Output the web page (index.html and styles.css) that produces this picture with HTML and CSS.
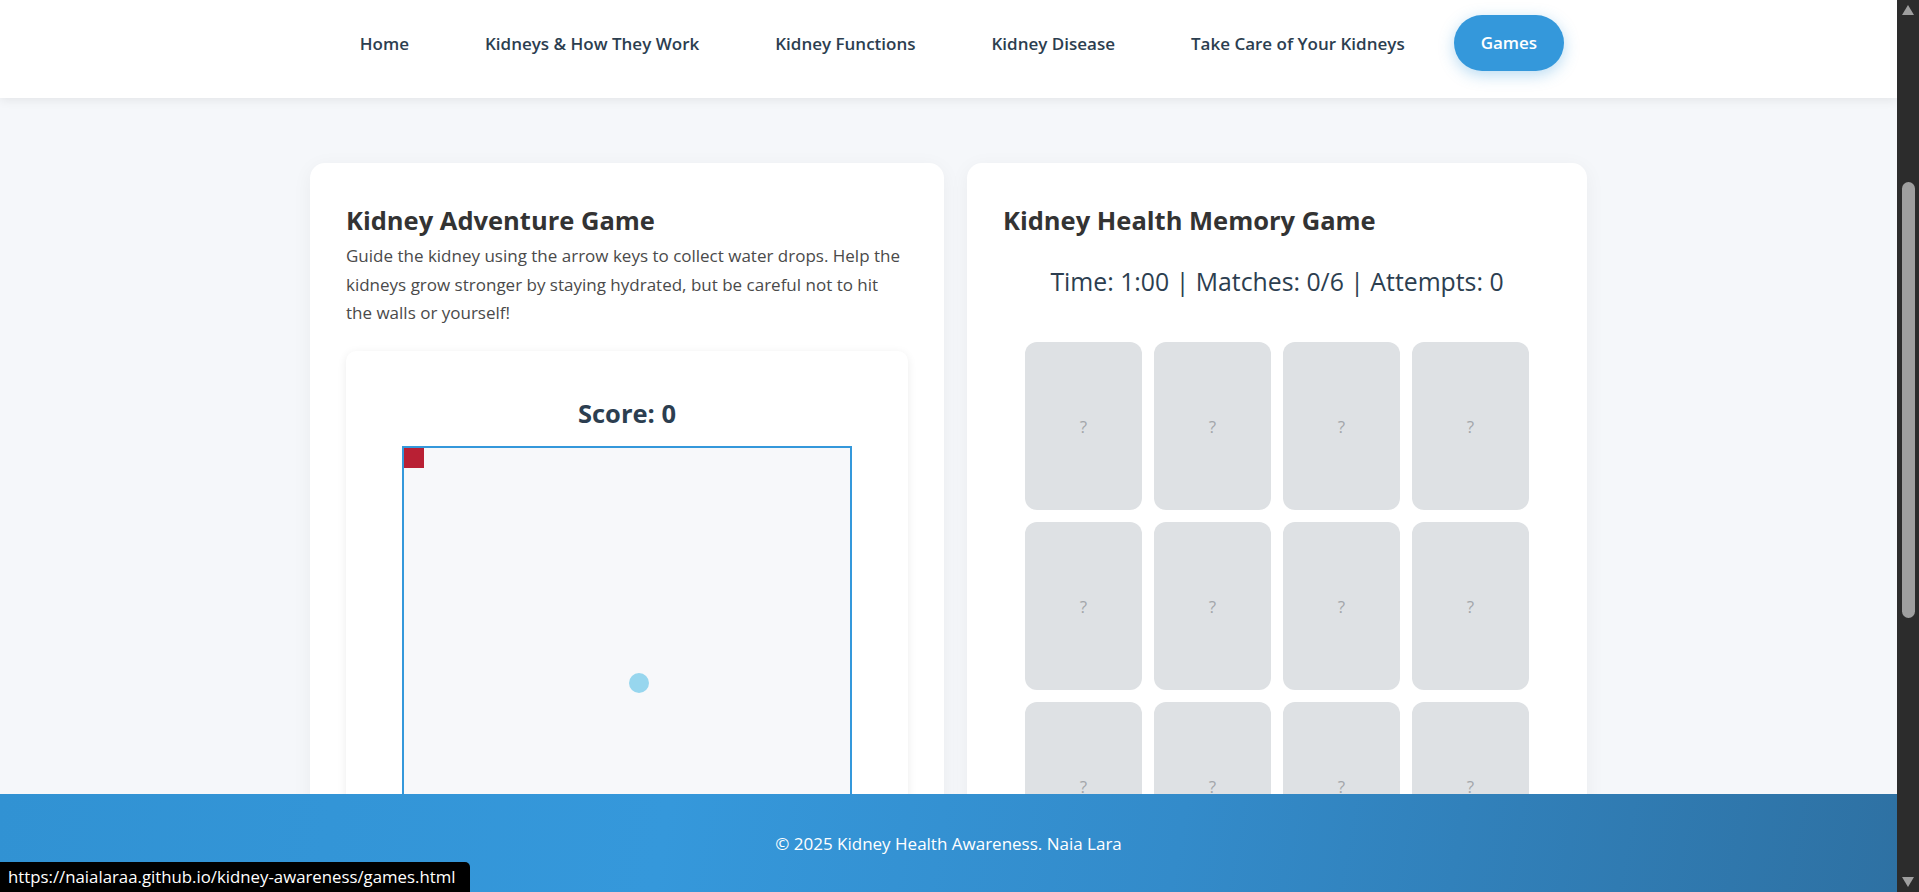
FILE: index.html
```html
<!DOCTYPE html>
<html lang="en">
<head>
<meta charset="utf-8">
<title>Games - Kidney Health Awareness</title>
<link rel="stylesheet" href="styles.css">
</head>
<body>
<div class="window">
  <div class="viewport">
    <header class="nav">
      <a class="nav-link" href="#">Home</a>
      <a class="nav-link" href="#">Kidneys &amp; How They Work</a>
      <a class="nav-link" href="#">Kidney Functions</a>
      <a class="nav-link" href="#">Kidney Disease</a>
      <a class="nav-link" href="#">Take Care of Your Kidneys</a>
      <a class="nav-link active" href="#">Games</a>
    </header>
    <main class="main">
      <div class="games">
        <section class="card">
          <h2 class="card-title">Kidney Adventure Game</h2>
          <p class="card-desc">Guide the kidney using the arrow keys to collect water drops. Help the kidneys grow stronger by staying hydrated, but be careful not to hit the walls or yourself!</p>
          <div class="game-box">
            <h3 class="score">Score: 0</h3>
            <div class="board">
              <span class="snake"></span>
              <span class="drop"></span>
            </div>
          </div>
        </section>
        <section class="card">
          <h2 class="card-title">Kidney Health Memory Game</h2>
          <div class="stats">Time: 1:00 | Matches: 0/6 | Attempts: 0</div>
          <div class="memory-grid">
            <div class="memory-card">?</div>
            <div class="memory-card">?</div>
            <div class="memory-card">?</div>
            <div class="memory-card">?</div>
            <div class="memory-card">?</div>
            <div class="memory-card">?</div>
            <div class="memory-card">?</div>
            <div class="memory-card">?</div>
            <div class="memory-card">?</div>
            <div class="memory-card">?</div>
            <div class="memory-card">?</div>
            <div class="memory-card">?</div>
          </div>
        </section>
      </div>
    </main>
    <footer class="footer">
      <p class="footer-text">© 2025 Kidney Health Awareness. Naia Lara</p>
    </footer>
    <div class="status-bubble">https://naialaraa.github.io/kidney-awareness/games.html</div>
  </div>
  <div class="scrollbar">
    <span class="sb-arrow sb-up"></span>
    <div class="sb-track"><span class="sb-thumb"></span></div>
    <span class="sb-arrow sb-down"></span>
  </div>
</div>
</body>
</html>
```
FILE: styles.css
```css
* { box-sizing: border-box; }

html, body {
  margin: 0;
  height: 100%;
  overflow: hidden;
}

body {
  font-family: "Open Sans", "Noto Sans", sans-serif;
  color: #333;
}

.window {
  display: flex;
  height: 100vh;
}

.viewport {
  flex: 1;
  min-width: 0;
  display: flex;
  flex-direction: column;
  position: relative;
  overflow: hidden;
}

/* NAV */
.nav {
  position: relative;
  z-index: 2;
  height: 98px;
  flex: none;
  background: #fff;
  box-shadow: 0 2px 10px rgba(0, 0, 0, 0.08);
  display: flex;
  justify-content: center;
  align-items: flex-start;
  gap: 22px;
  padding-top: 15px;
}

.nav-link {
  display: block;
  padding: 17px 27px 15px;
  height: 56px;
  line-height: 24px;
  font-size: 17px;
  font-weight: 600;
  color: #2c3e50;
  text-decoration: none;
  border-radius: 28px;
  white-space: nowrap;
}

.nav-link.active {
  padding-top: 16px;
  padding-bottom: 16px;
  background: #3498db;
  color: #fff;
  box-shadow: 0 4px 15px rgba(52, 152, 219, 0.35);
}

/* MAIN */
.main {
  flex: 1;
  min-height: 0;
  overflow: hidden;
  background: #f5f7fa;
  padding-top: 65px;
}

.games {
  display: grid;
  grid-template-columns: 634px 620px;
  column-gap: 23px;
  justify-content: center;
  align-items: start;
}

.card {
  background: #fff;
  border-radius: 15px;
  box-shadow: 0 4px 20px rgba(0, 0, 0, 0.05);
  padding: 36px 36px 40px;
  min-height: 900px;
}

.card-title {
  margin: 6px 0 6px;
  font-size: 25.5px;
  line-height: 31px;
  font-weight: 700;
  color: #333;
}

.card-desc {
  margin: 0 0 23px;
  font-size: 17px;
  line-height: 28.5px;
  color: #4a4a4a;
}

.game-box {
  background: #fff;
  border-radius: 10px;
  box-shadow: 0 2px 10px rgba(0, 0, 0, 0.08);
  padding: 47px 0 40px;
  display: flex;
  flex-direction: column;
  align-items: center;
}

.score {
  margin: 0 0 18px;
  font-size: 25.5px;
  line-height: 30px;
  font-weight: 700;
  color: #2c3e50;
}

.board {
  position: relative;
  width: 450px;
  height: 450px;
  border: 2px solid #3498db;
  background: #f7f8fa;
}

.snake {
  position: absolute;
  left: 0;
  top: 0;
  width: 20px;
  height: 20px;
  background: #b92034;
}

.drop {
  position: absolute;
  left: 225px;
  top: 225px;
  width: 20px;
  height: 20px;
  border-radius: 50%;
  background: #97d6ee;
}

/* MEMORY */
.stats {
  margin-top: 31px;
  text-align: center;
  font-size: 24.8px;
  line-height: 29px;
  color: #2c3e50;
}

.memory-grid {
  margin: 46px auto 0;
  display: grid;
  grid-template-columns: repeat(4, 117px);
  grid-auto-rows: 168px;
  gap: 12px;
  justify-content: center;
}

.memory-card {
  background: #dee1e4;
  border-radius: 12px;
  display: flex;
  align-items: center;
  justify-content: center;
  font-size: 17px;
  color: #a3a6aa;
}

/* FOOTER */
.footer {
  flex: none;
  height: 98px;
  background: linear-gradient(100deg, #3192d3 0%, #3598db 35%, #338bca 62%, #2e71a3 100%);
  display: flex;
  align-items: center;
  justify-content: center;
}

.footer-text {
  margin: 0;
  font-size: 17px;
  color: #fff;
}

/* Browser status bubble */
.status-bubble {
  position: absolute;
  left: 0;
  bottom: 0;
  height: 30px;
  width: 470px;
  padding: 3px 0 0 8px;
  background: #000;
  color: #fff;
  font-size: 16.8px;
  line-height: 24px;
  border-top-right-radius: 5px;
  white-space: nowrap;
}

/* SCROLLBAR */
.scrollbar {
  flex: none;
  width: 22px;
  background: #2c2c2c;
  display: flex;
  flex-direction: column;
  align-items: center;
}

.sb-arrow {
  flex: none;
  width: 0;
  height: 0;
  border-left: 6.5px solid transparent;
  border-right: 6.5px solid transparent;
}

.sb-up {
  margin-top: 5px;
  border-bottom: 10px solid #9f9f9f;
}

.sb-down {
  margin-bottom: 5px;
  border-top: 10px solid #9f9f9f;
}

.sb-track {
  flex: 1;
  width: 100%;
  display: flex;
  justify-content: center;
  padding-top: 167px;
}

.sb-thumb {
  width: 13px;
  height: 436px;
  border-radius: 6.5px;
  background: #9f9f9f;
}
```
